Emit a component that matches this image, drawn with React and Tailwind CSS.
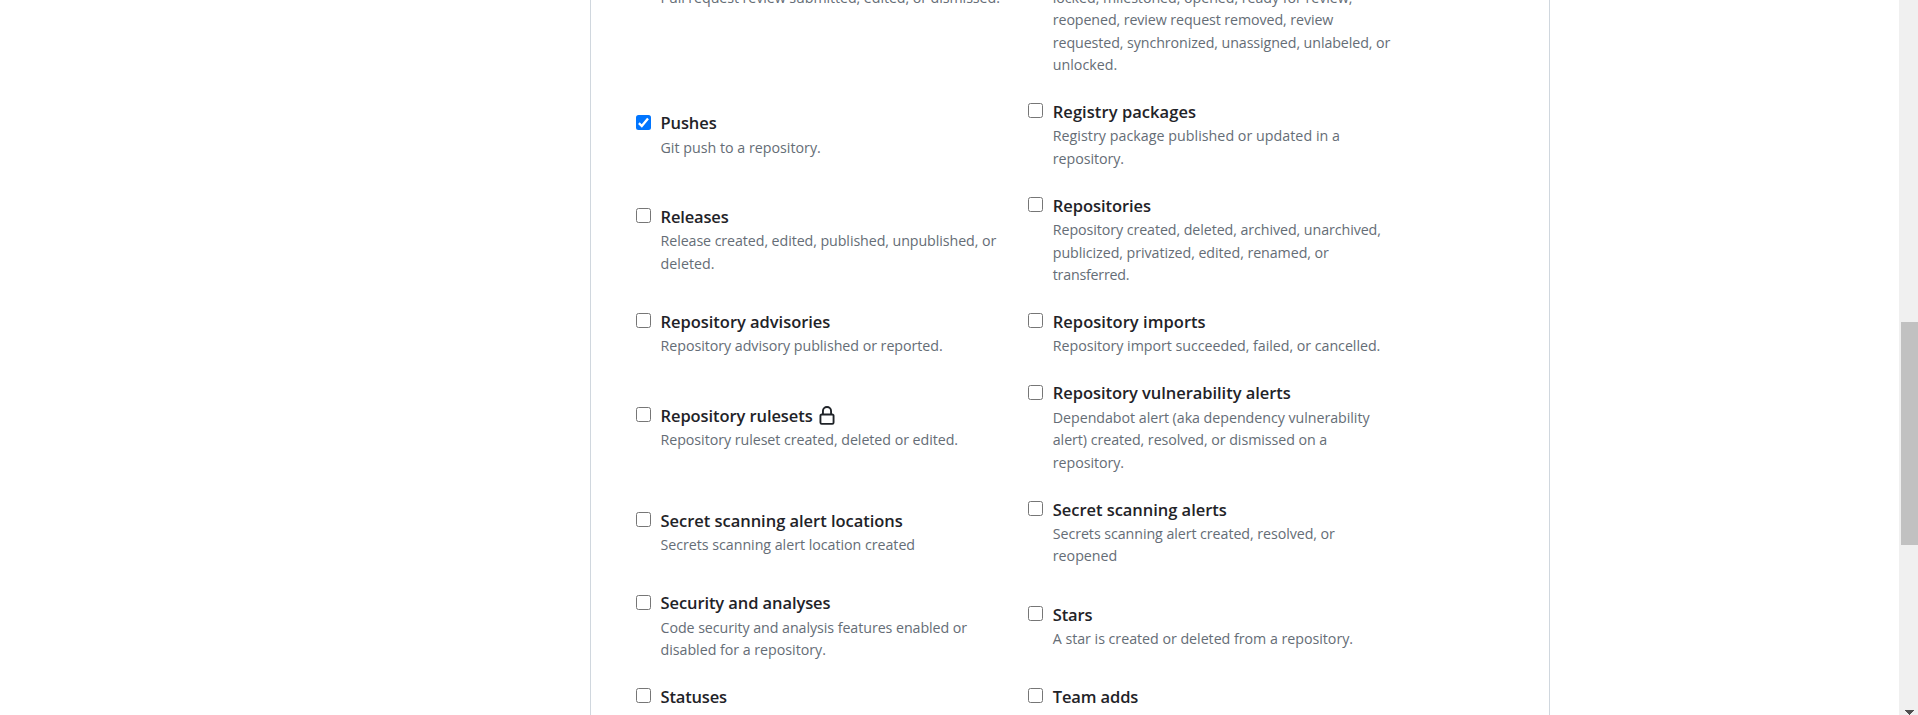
const rows = [
  [
    {
      title: "Pushes",
      titleTracking: "tracking-[-0.1px]",
      checked: true,
      lines: [["Git push to a repository.", "tracking-normal"]],
    },
    {
      title: "Registry packages",
      titleTracking: "tracking-[0.06px]",
      lines: [
        ["Registry package published or updated in a", "tracking-[0.03px]"],
        ["repository.", "tracking-[-0.05px]"],
      ],
    },
  ],
  [
    {
      title: "Releases",
      titleTracking: "tracking-[-0.15px]",
      lines: [
        ["Release created, edited, published, unpublished, or", "tracking-[-0.085px]"],
        ["deleted.", "tracking-[0.02px]"],
      ],
    },
    {
      title: "Repositories",
      titleTracking: "tracking-[-0.05px]",
      lines: [
        ["Repository created, deleted, archived, unarchived,", "tracking-[-0.08px]"],
        ["publicized, privatized, edited, renamed, or", "tracking-[-0.065px]"],
        ["transferred.", "tracking-[-0.22px]"],
      ],
    },
  ],
  [
    {
      title: "Repository advisories",
      titleTracking: "tracking-[-0.03px]",
      lines: [["Repository advisory published or reported.", "tracking-[-0.045px]"]],
    },
    {
      title: "Repository imports",
      titleTracking: "tracking-[0.04px]",
      lines: [["Repository import succeeded, failed, or cancelled.", "tracking-[-0.04px]"]],
    },
  ],
  [
    {
      title: "Repository rulesets",
      titleTracking: "tracking-[-0.08px]",
      locked: true,
      lines: [["Repository ruleset created, deleted or edited.", "tracking-[-0.055px]"]],
    },
    {
      title: "Repository vulnerability alerts",
      titleTracking: "tracking-[-0.05px]",
      lines: [
        ["Dependabot alert (aka dependency vulnerability", "tracking-[-0.045px]"],
        ["alert) created, resolved, or dismissed on a", "tracking-[-0.06px]"],
        ["repository.", "tracking-[-0.05px]"],
      ],
    },
  ],
  [
    {
      title: "Secret scanning alert locations",
      titleTracking: "tracking-[-0.03px]",
      lines: [["Secrets scanning alert location created", "tracking-[-0.035px]"]],
    },
    {
      title: "Secret scanning alerts",
      titleTracking: "tracking-[-0.04px]",
      lines: [
        ["Secrets scanning alert created, resolved, or", "tracking-[-0.07px]"],
        ["reopened", "tracking-normal"],
      ],
    },
  ],
  [
    {
      title: "Security and analyses",
      titleTracking: "tracking-[-0.09px]",
      lines: [
        ["Code security and analysis features enabled or", "tracking-[-0.065px]"],
        ["disabled for a repository.", "tracking-[-0.03px]"],
      ],
    },
    {
      title: "Stars",
      titleTracking: "tracking-[-0.12px]",
      lines: [["A star is created or deleted from a repository.", "tracking-[-0.03px]"]],
    },
  ],
  [
    { title: "Statuses", titleTracking: "tracking-[-0.17px]", lines: [] },
    { title: "Team adds", titleTracking: "tracking-[-0.12px]", lines: [] },
  ],
];

function LockIcon() {
  return (
    <svg viewBox="0 0 16 16" className="ml-1 size-5 fill-[#1f2328]" aria-hidden="true">
      <path d="M4 4a4 4 0 0 1 8 0v2h.25c.966 0 1.75.784 1.75 1.75v5.5A1.75 1.75 0 0 1 12.25 15h-8.5A1.75 1.75 0 0 1 2 13.25v-5.5C2 6.784 2.784 6 3.75 6H4Zm8.25 3.5h-8.5a.25.25 0 0 0-.25.25v5.5c0 .138.112.25.25.25h8.5a.25.25 0 0 0 .25-.25v-5.5a.25.25 0 0 0-.25-.25ZM10.5 6V4a2.5 2.5 0 1 0-5 0v2Z" />
    </svg>
  );
}

function Checkbox({ checked }) {
  if (checked) {
    return (
      <span role="checkbox" aria-checked="true" className="mt-[4.3px] flex size-[15px] shrink-0 rounded-[2.5px] bg-[#0075ff]">
        <svg viewBox="0 0 15 15" className="size-[15px] fill-none stroke-white stroke-[2.3]">
          <path d="M2.9 8.1 L5.8 11 L12 3.4" />
        </svg>
      </span>
    );
  }
  return <span role="checkbox" aria-checked="false" className="mt-[4.3px] size-[15px] shrink-0 rounded-[2.5px] border border-[#767676] bg-white" />;
}

function Lines({ lines }) {
  return (
    <div className="text-[14.25px] leading-[22.5px] text-[#656d76]">
      {lines.map(([text, tracking]) => (
        <div key={text} className={tracking}>{text}</div>
      ))}
    </div>
  );
}

function EventOption({ item }) {
  return (
    <div className="flex w-[392.25px] gap-[9.5px] whitespace-nowrap">
      <Checkbox checked={item.checked} />
      <div>
        <div className="flex h-[26.25px] items-center text-[16.5px] leading-[26.25px] font-semibold text-[#1f2328]">
          <span className={item.titleTracking}>{item.title}</span>
          {item.locked && <LockIcon />}
        </div>
        <Lines lines={item.lines} />
      </div>
    </div>
  );
}

export default function App() {
  return (
    <div className="flex h-[715px] overflow-hidden bg-white font-['Open_Sans','Noto_Sans',sans-serif]">
      <div className="flex flex-1 justify-start pl-[590px]">
        <main className="w-[960px] border-x border-[#d0d7de] pl-[45px]">
          <div className="-mt-[13.5px] flex pb-[22.5px] whitespace-nowrap">
            <div className="w-[392.25px] pl-[24.5px]">
              <Lines lines={[["Pull request review submitted, edited, or dismissed.", "tracking-[-0.075px]"]]} />
            </div>
            <div className="w-[392.25px] pl-[24.5px]">
              <Lines
                lines={[
                  ["locked, milestoned, opened, ready for review,", "tracking-[-0.05px]"],
                  ["reopened, review request removed, review", "tracking-[-0.1px]"],
                  ["requested, synchronized, unassigned, unlabeled, or", "tracking-[-0.09px]"],
                  ["unlocked.", "tracking-normal"],
                ]}
              />
            </div>
          </div>
          {rows.map(([left, right]) => (
            <div key={left.title} className="flex items-center pb-[22.5px]">
              <EventOption item={left} />
              <EventOption item={right} />
            </div>
          ))}
        </main>
      </div>
      <div className="flex w-[19px] flex-col justify-between bg-[#f0f0f0] pt-[322px] pl-[2px]">
        <div className="h-[223px] bg-[#c1c1c1]" />
        <svg viewBox="0 0 17 5" className="h-[5px] w-[17px] fill-[#505050]" shapeRendering="crispEdges">
          <path d="M4 0h9v1h-1v1h-1v1h-1v1h-1v1h-1v-1h-1v-1h-1v-1h-1v-1h-1z" />
        </svg>
      </div>
    </div>
  );
}
